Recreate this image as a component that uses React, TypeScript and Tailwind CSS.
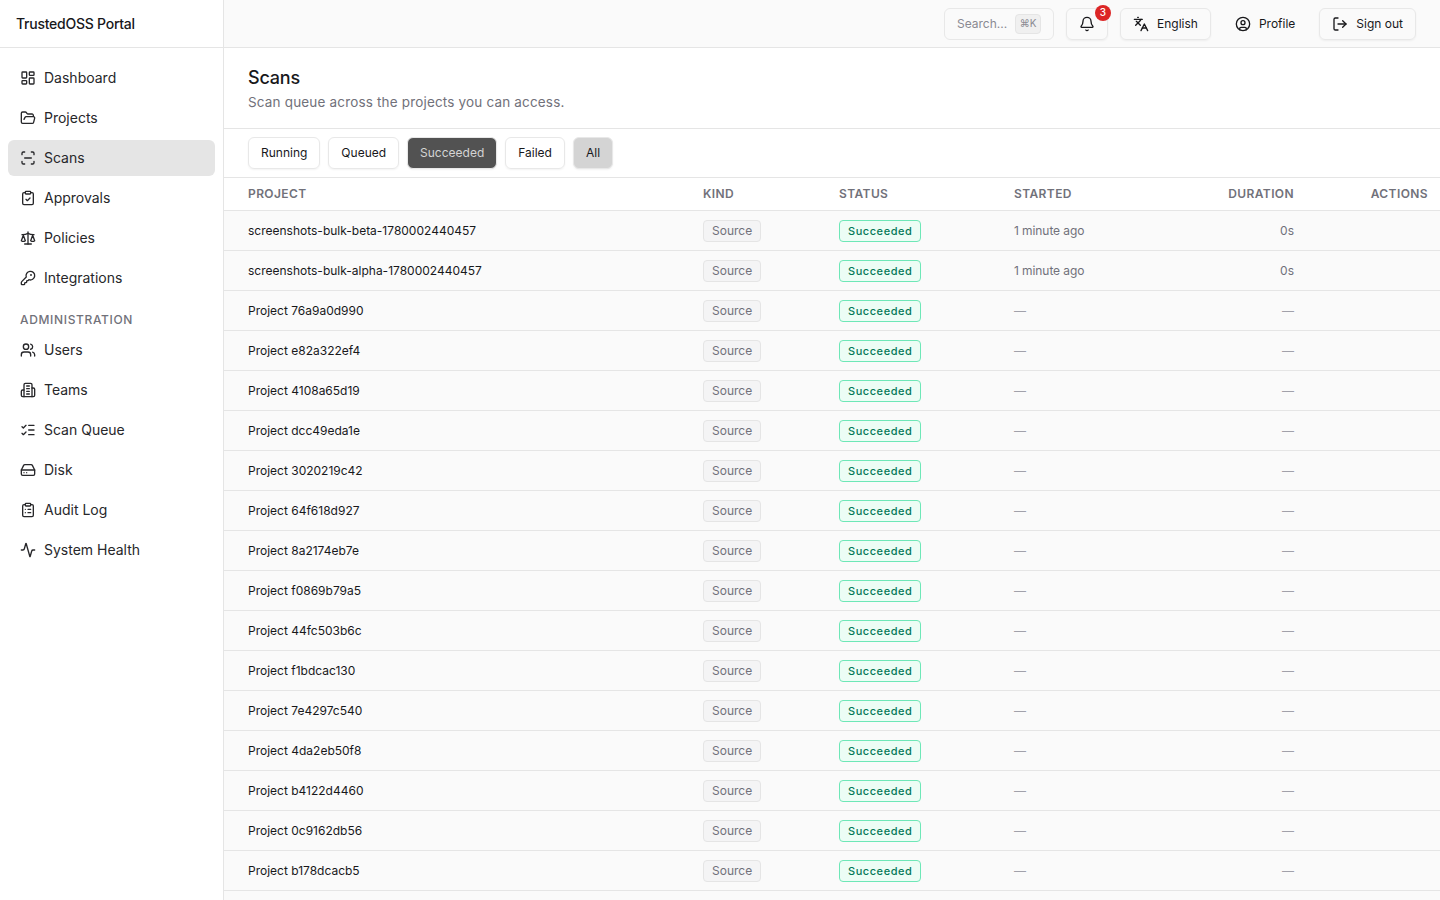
import { Activity, Bell, ClipboardCheck, ClipboardList, CircleUser, FolderOpen, HardDrive, KeyRound, Languages, LayoutDashboard, ListChecks, LogOut, Scale, ScanLine, Users } from "lucide-react";
import type { ComponentType } from "react";

function TeamsIcon({ size = 16, strokeWidth = 2, className }: { size?: number; strokeWidth?: number; className?: string }) {
  return (
    <svg xmlns="http://www.w3.org/2000/svg" width={size} height={size} viewBox="0 0 24 24" fill="none" stroke="currentColor" strokeWidth={strokeWidth} strokeLinecap="round" strokeLinejoin="round" className={className}>
      <path d="M6 22V4a2 2 0 0 1 2-2h8a2 2 0 0 1 2 2v18Z" />
      <path d="M6 12H4a2 2 0 0 0-2 2v6a2 2 0 0 0 2 2h2" />
      <path d="M18 9h2a2 2 0 0 1 2 2v9a2 2 0 0 1-2 2h-2" />
      <path d="M10 6h4" />
      <path d="M10 10h4" />
      <path d="M10 14h4" />
      <path d="M10 18h4" />
    </svg>
  );
}

type IconT = ComponentType<{ size?: number; strokeWidth?: number; className?: string }>;

const main: { label: string; icon: IconT; active?: boolean }[] = [
  { label: "Dashboard", icon: LayoutDashboard },
  { label: "Projects", icon: FolderOpen },
  { label: "Scans", icon: ScanLine, active: true },
  { label: "Approvals", icon: ClipboardCheck },
  { label: "Policies", icon: Scale },
  { label: "Integrations", icon: KeyRound },
];
const admin: { label: string; icon: IconT }[] = [
  { label: "Users", icon: Users },
  { label: "Teams", icon: TeamsIcon },
  { label: "Scan Queue", icon: ListChecks },
  { label: "Disk", icon: HardDrive },
  { label: "Audit Log", icon: ClipboardList },
  { label: "System Health", icon: Activity },
];
const rows = [
  ["screenshots-bulk-beta-1780002440457", "1 minute ago", "0s"],
  ["screenshots-bulk-alpha-1780002440457", "1 minute ago", "0s"],
  ...["76a9a0d990", "e82a322ef4", "4108a65d19", "dcc49eda1e", "3020219c42", "64f618d927", "8a2174eb7e", "f0869b79a5", "44fc503b6c", "f1bdcac130", "7e4297c540", "4da2eb50f8", "b4122d4460", "0c9162db56", "b178dcacb5"].map((id) => [`Project ${id}`, "—", "—"]),
];

function NavItem({ label, icon: Icon, active }: { label: string; icon: IconT; active?: boolean }) {
  return (
    <a className={`flex h-9 items-center gap-2 rounded-md px-3 text-sm font-normal text-[#27272a] ${active ? "bg-[#e5e5e5]" : ""}`}>
      <Icon size={16} strokeWidth={2} className="shrink-0" />
      {label}
    </a>
  );
}

const btn = "flex h-8 items-center rounded-md border border-[#e8e8e8] text-xs text-[#18181b] shadow-[0_1px_2px_rgba(0,0,0,0.05)]";
const cell = "border-b border-[#e5e5e5]";

export default function App() {
  return (
    <div className="flex h-[900px] overflow-hidden bg-white font-['Inter',sans-serif] text-[#18181b]">
      <aside className="w-56 shrink-0 border-r border-[#e5e5e5] bg-white">
        <div className="flex h-12 items-center border-b border-[#e5e5e5] px-4 text-sm font-medium tracking-[-0.25px]">TrustedOSS Portal</div>
        <nav className="flex flex-col gap-1 p-2 pt-3">
          {main.map((i) => <NavItem key={i.label} {...i} />)}
          <div className="mt-1 flex h-[24px] items-end px-3 text-xs font-medium tracking-[0.65px] text-[#71717a]">ADMINISTRATION</div>
          {admin.map((i) => <NavItem key={i.label} {...i} />)}
        </nav>
      </aside>
      <div className="flex min-w-0 flex-1 flex-col">
        <header className="flex h-12 shrink-0 items-center justify-end gap-3 border-b border-[#e5e5e5] bg-[#fafafa] pr-6">
          <div className="flex h-8 w-[110px] items-center justify-between rounded-md border border-[#e8e8e8] pl-3 pr-3 text-xs text-[#8a8a92]">
            Search...
            <kbd className="flex h-5 w-[26px] items-center justify-center rounded border border-[#e5e5e5] bg-[#f0f0f0] font-['Inter',sans-serif] text-[10px] text-[#8a8a92]">⌘K</kbd>
          </div>
          <div className={`${btn} relative w-[42px] justify-center`}>
            <Bell size={16} strokeWidth={2} />
            <span className="absolute -right-[4px] -top-[4px] flex h-4 w-4 items-center justify-center rounded-full bg-[#dc2626] text-[10px] font-medium text-white">3</span>
          </div>
          <div className={`${btn} gap-2 px-3`}><Languages size={16} strokeWidth={2} />English</div>
          <div className="flex h-8 items-center gap-2 px-3 text-xs"><CircleUser size={16} strokeWidth={2} />Profile</div>
          <div className={`${btn} gap-2 px-3`}><LogOut size={16} strokeWidth={2} />Sign out</div>
        </header>
        <main className="min-h-0 flex-1 overflow-hidden bg-[#fafafa]">
          <div className="h-[81px] border-b border-[#e5e5e5] bg-white px-6 pt-[17px]">
            <h1 className="text-lg font-medium leading-[26px] tracking-[-0.2px]">Scans</h1>
            <p className="mt-[1px] text-[13.5px] leading-5 tracking-[0.17px] text-[#71717a]">Scan queue across the projects you can access.</p>
          </div>
          <div className="flex h-[49px] items-center gap-2 border-b border-[#e5e5e5] bg-white px-6">
            <button className={`${btn} px-3`}>Running</button>
            <button className={`${btn} px-3`}>Queued</button>
            <button className={`${btn} border-[#d4d4d4] bg-[#525252] px-3 text-[#d4d4d4]`}>Succeeded</button>
            <button className={`${btn} px-3`}>Failed</button>
            <button className={`${btn} border-[#d4d4d4] bg-[#d4d4d4] px-3 text-[#3f3f46]`}>All</button>
          </div>
          <table className="w-full table-fixed border-separate border-spacing-0 text-xs">
            <colgroup>
              <col className="w-[467px]" />
              <col className="w-[136px]" />
              <col className="w-[175px]" />
              <col className="w-[152px]" />
              <col className="w-[152px]" />
              <col />
            </colgroup>
            <thead>
              <tr className="h-[33px] bg-white text-left text-xs tracking-[0.4px] text-[#71717a]">
                <th className={`${cell} pl-6 pr-3 font-semibold`}>PROJECT</th>
                <th className={`${cell} px-3 font-semibold`}>KIND</th>
                <th className={`${cell} px-3 font-semibold`}>STATUS</th>
                <th className={`${cell} px-3 font-semibold`}>STARTED</th>
                <th className={`${cell} px-3 text-right font-semibold`}>DURATION</th>
                <th className={`${cell} px-3 text-right font-semibold`}>ACTIONS</th>
              </tr>
            </thead>
            <tbody>
              {rows.map(([name, started, duration]) => (
                <tr key={name} className="h-10 bg-[#fafafa]">
                  <td className={`${cell} pl-6 pr-3 text-[#18181b]`}>{name}</td>
                  <td className={`${cell} px-3`}>
                    <span className="inline-flex h-[22px] items-center rounded border border-[#e5e5e5] bg-[#f4f4f5] px-2 text-[#71717a]">Source</span>
                  </td>
                  <td className={`${cell} px-3`}>
                    <span className="inline-flex h-[22px] items-center rounded border border-[#6ee7b7] bg-[#ecfdf5] px-2 pt-px text-[11px] font-medium tracking-[0.55px] text-[#047857]">Succeeded</span>
                  </td>
                  <td className={`${cell} px-3 tracking-[-0.08px] ${started === "—" ? "text-[#a1a1aa]" : "text-[#71717a]"}`}>{started}</td>
                  <td className={`${cell} px-3 text-right ${duration === "—" ? "text-[#a1a1aa]" : "text-[#71717a]"}`}>{duration}</td>
                  <td className={`${cell} px-3`} />
                </tr>
              ))}
            </tbody>
          </table>
        </main>
      </div>
    </div>
  );
}
